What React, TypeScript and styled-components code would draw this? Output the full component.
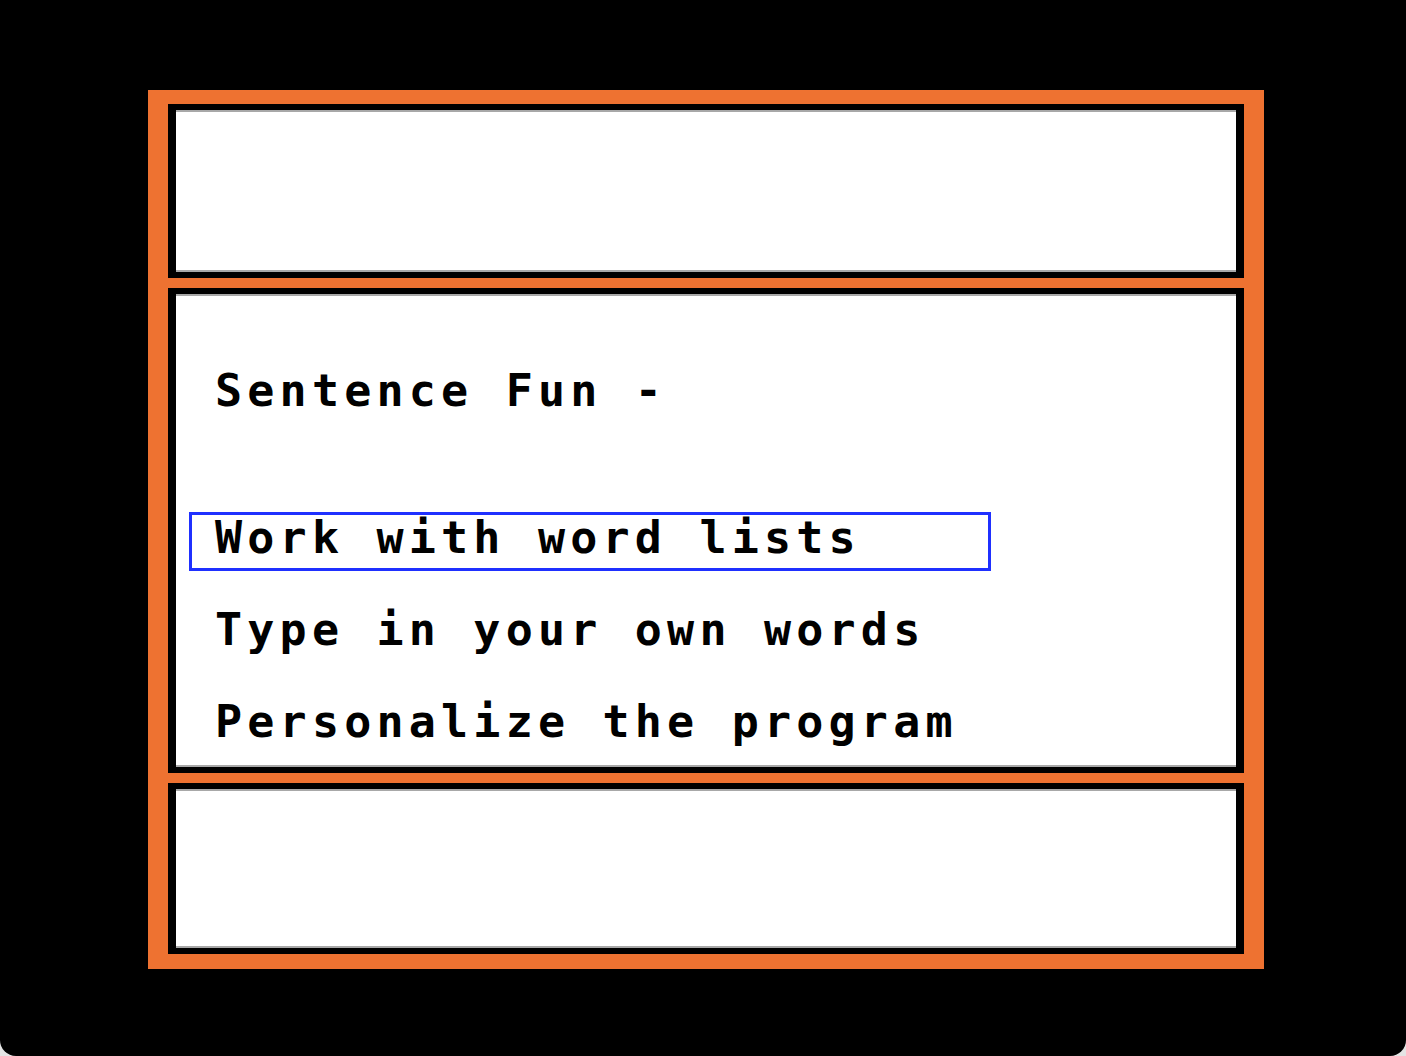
import { createGlobalStyle, styled } from "styled-components"

const GlobalStyle = createGlobalStyle`
    html, body {
        margin: 0;
        padding: 0;
        background: #e4e4e4;
    }
    #root {
        width: 1406px;
        height: 1056px;
    }
`

const Screen = styled.div`
    box-sizing: border-box;
    width: 1406px;
    height: 1056px;
    background: #000;
    border-radius: 0 0 16px 16px;
    padding: 90px 0 0 148px;
`

const Frame = styled.div`
    box-sizing: border-box;
    width: 1116px;
    height: 879px;
    background: #ee7231;
    padding: 14px 20px 15px;
    display: flex;
    flex-direction: column;
    gap: 10px;
`

const Panel = styled.section<{ $height: number }>`
    box-sizing: border-box;
    height: ${(p) => p.$height}px;
    border-style: solid;
    border-color: #000;
    border-width: 6px 8px;
    background: #fff;
    box-shadow: inset 0 2px 0 #a8a8a8, inset 0 -2px 0 #a8a8a8;
`

const Menu = styled.div`
    display: flex;
    flex-direction: column;
    padding: 74px 0 0 13px;
    font-family: "DejaVu Sans Mono", "Liberation Mono", monospace;
    font-weight: bold;
    font-size: 45px;
    line-height: 45px;
    letter-spacing: 5.2px;
    color: #000;
    white-space: pre;
`

const Title = styled.div`
    padding-left: 26px;
    margin-bottom: 99px;
`

const Option = styled.div<{ $selected?: boolean }>`
    box-sizing: border-box;
    width: 802px;
    height: 59px;
    padding: 0 0 8px 23px;
    border: 3px solid ${(p) => (p.$selected ? "#1f30ff" : "transparent")};
    margin-bottom: 33px;
`

const options = [
    "Work with word lists",
    "Type in your own words",
    "Personalize the program",
]

export default function App() {
    return (
        <>
            <GlobalStyle />
            <Screen>
                <Frame>
                    <Panel $height={174} />
                    <Panel $height={485}>
                        <Menu>
                            <Title>Sentence Fun -</Title>
                            {options.map((o, i) => (
                                <Option key={o} $selected={i === 0}>{o}</Option>
                            ))}
                        </Menu>
                    </Panel>
                    <Panel $height={171} />
                </Frame>
            </Screen>
        </>
    )
}
